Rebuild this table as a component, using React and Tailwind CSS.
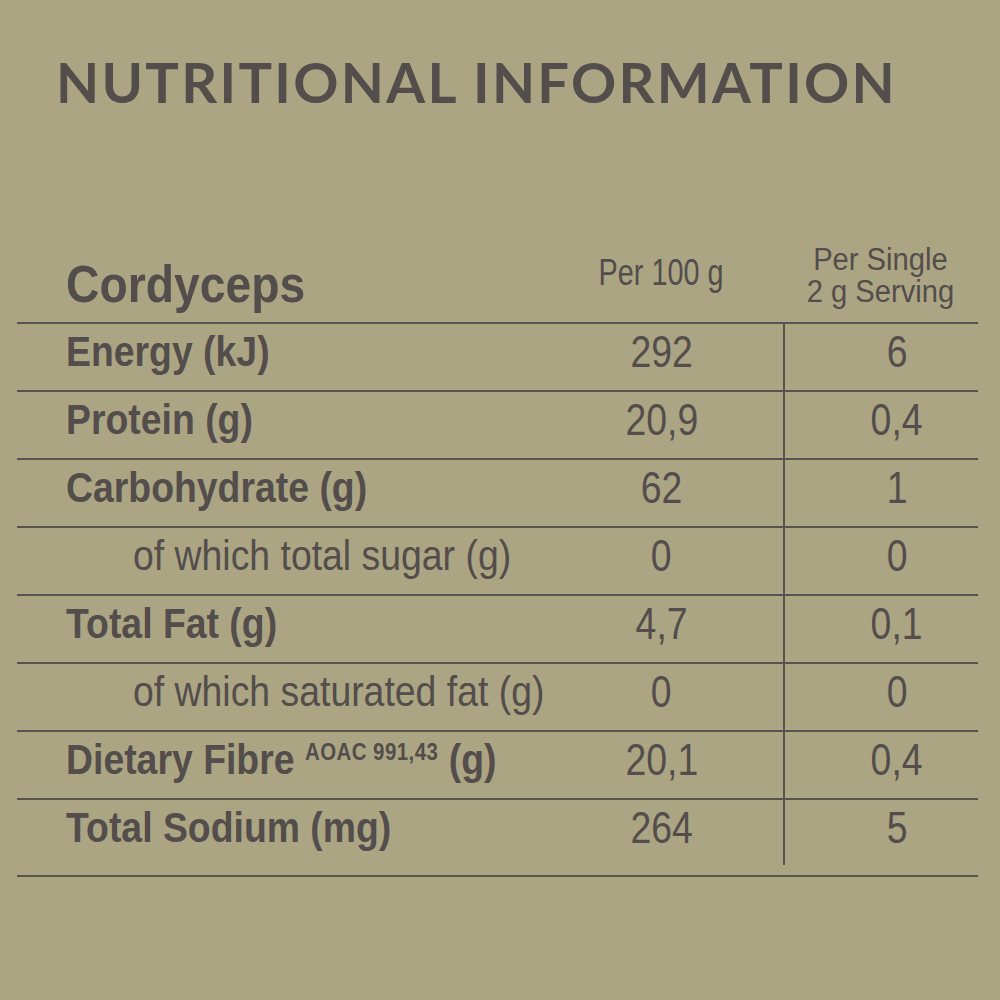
import React from 'react';

const rows = [
  { label: 'Energy (kJ)', per100: '292', serving: '6' },
  { label: 'Protein (g)', per100: '20,9', serving: '0,4' },
  { label: 'Carbohydrate (g)', per100: '62', serving: '1' },
  { label: 'of which total sugar (g)', per100: '0', serving: '0', sub: true },
  { label: 'Total Fat (g)', per100: '4,7', serving: '0,1' },
  { label: 'of which saturated fat (g)', per100: '0', serving: '0', sub: true },
  { label: 'Dietary Fibre', sup: 'AOAC 991,43', unit: '(g)', per100: '20,1', serving: '0,4' },
  { label: 'Total Sodium (mg)', per100: '264', serving: '5', last: true },
];

const Label = ({ row }) => {
  if (row.sub) {
    return (
      <span className="inline-block origin-left scale-x-[0.89] whitespace-nowrap text-[42px] leading-none">
        {row.label}
      </span>
    );
  }
  return (
    <span className="inline-block origin-left scale-x-[0.89] whitespace-nowrap text-[42px] font-bold leading-none">
      {row.label}
      {row.sup && (
        <>
          {' '}
          <span className="align-[14px] text-[23px] tracking-[0.5px]">{row.sup}</span>{' '}
          {row.unit}
        </>
      )}
    </span>
  );
};

const Value = ({ children }) => (
  <span className="inline-block scale-x-[0.85] whitespace-nowrap text-[44px] leading-none">{children}</span>
);

const App = () => {
  return (
    <div className="h-[1000px] w-[1000px] bg-[#aca583] font-['Liberation_Sans',Arial,sans-serif] text-[#534d4b]">
      <h1 className="h-[110px] pl-[56px] pt-[54px] font-['Lato',sans-serif] text-[56px] font-bold leading-none tracking-[0.041em]">
        NUTRITIONAL INFORMATION
      </h1>

      <div className="ml-[17px] w-[961px]">
        <div className="flex h-[214px] items-end border-b-2 border-[#5a5450]">
          <div className="w-[523px] pb-[12px] pl-[49px]">
            <span className="inline-block origin-left scale-x-[0.89] whitespace-nowrap text-[52px] font-bold leading-none">
              Cordyceps
            </span>
          </div>
          <div className="w-[243px] pb-[30px] text-center">
            <span className="inline-block scale-x-[0.8] whitespace-nowrap text-[36px] leading-none">Per 100 g</span>
          </div>
          <div className="flex-1 pb-[13px] text-center">
            <span className="inline-block scale-x-[0.94] whitespace-nowrap text-[31px] leading-[32px]">
              Per Single
              <br />
              2 g Serving
            </span>
          </div>
        </div>

        {rows.map((row) => (
          <div
            key={row.label}
            className={`flex border-b-2 border-[#5a5450] ${row.last ? 'h-[77px]' : 'h-[68px]'}`}
          >
            <div className={`w-[523px] pt-[7px] ${row.sub ? 'pl-[116px]' : 'pl-[49px]'}`}>
              <Label row={row} />
            </div>
            <div className="w-[243px] pt-[6px] text-center">
              <Value>{row.per100}</Value>
            </div>
            <div
              className={`flex-1 border-l-2 border-[#5a5450] pl-[31px] pt-[6px] text-center ${
                row.last ? 'h-[65px]' : ''
              }`}
            >
              <Value>{row.serving}</Value>
            </div>
          </div>
        ))}
      </div>
    </div>
  );
};

export default App;
